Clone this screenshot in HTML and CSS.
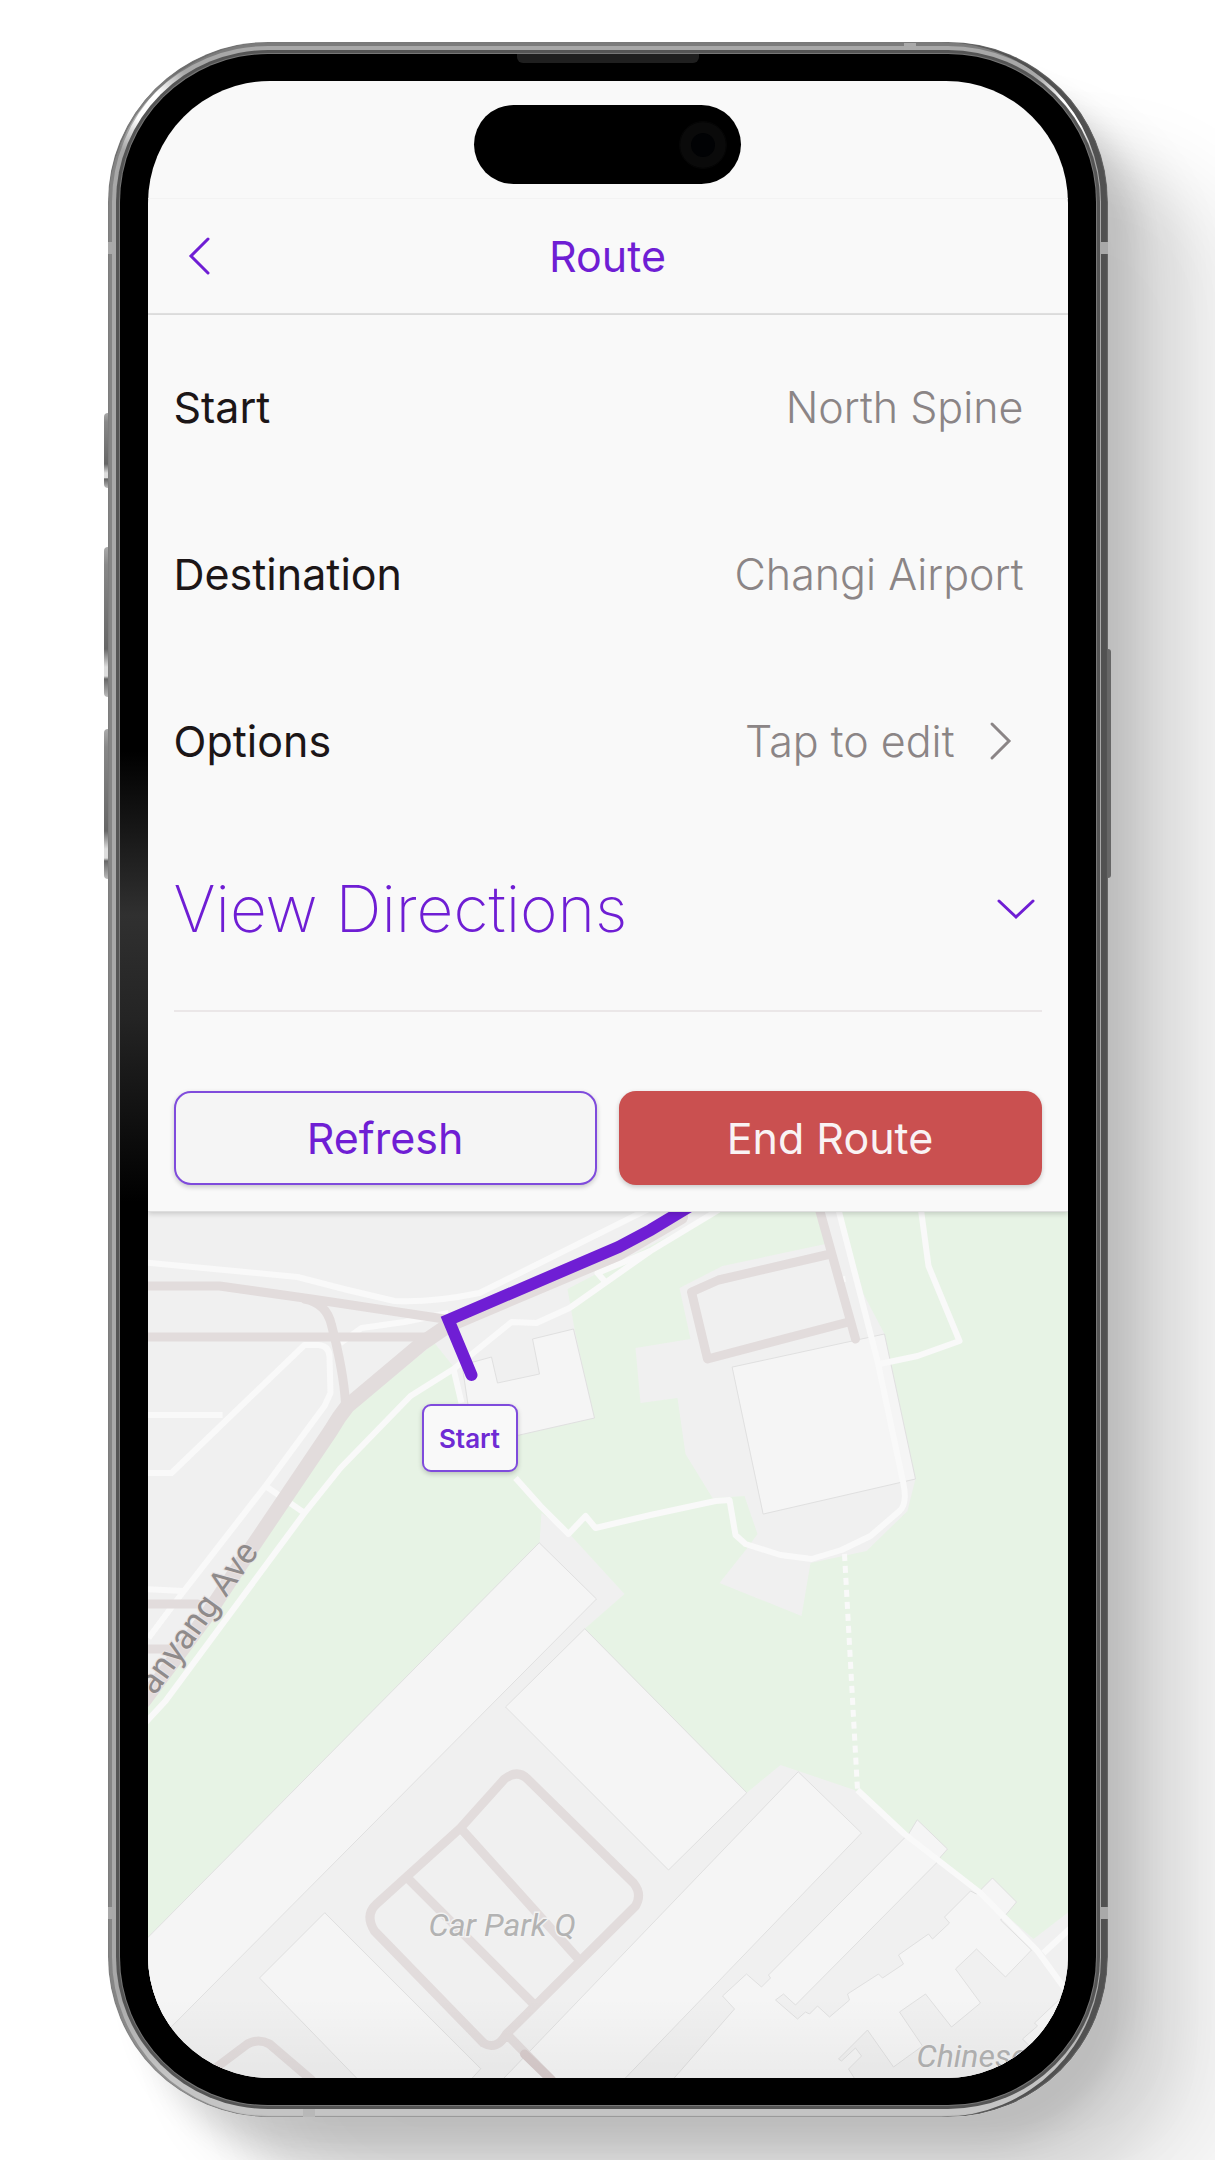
FILE: index.html
```html
<!DOCTYPE html>
<html lang="en">
<head>
<meta charset="utf-8">
<meta name="viewport" content="width=device-width, initial-scale=1">
<title>Route</title>
<link rel="stylesheet" href="styles.css">
</head>
<body>
<main class="stage">
  <div class="phone">
    <span class="side-key key-action"></span>
    <span class="side-key key-up"></span>
    <span class="side-key key-down"></span>
    <span class="side-key key-power"></span>
    <span class="band band-left band-high"></span>
    <span class="band band-right band-high"></span>
    <span class="band band-left band-low"></span>
    <span class="band band-right band-low"></span>
    <span class="band band-top"></span>
    <span class="band band-bottom"></span>
    <div class="bezel">
      <span class="speaker"></span>
      <div class="screen">
        <div class="status-bar">
          <div class="island"><span class="camera"></span></div>
        </div>
        <header class="nav-bar">
          <button class="back" type="button" aria-label="Back">
            <svg width="24" height="40" viewBox="0 0 24 40"><path d="M21 3 4 20 21 37"/></svg>
          </button>
          <h1 class="title">Route</h1>
        </header>
        <section class="panel">
          <div class="row">
            <span class="label">Start</span>
            <span class="value">North Spine</span>
          </div>
          <div class="row">
            <span class="label">Destination</span>
            <span class="value">Changi Airport</span>
          </div>
          <button class="row row-button" type="button">
            <span class="label">Options</span>
            <span class="value value-link">Tap to edit
              <svg width="24" height="40" viewBox="0 0 24 40"><path d="M3 3 20 20 3 37"/></svg>
            </span>
          </button>
          <button class="directions" type="button" aria-expanded="false">
            <span>View Directions</span>
            <svg width="40" height="24" viewBox="0 0 40 24"><path d="M3 4 20 20 37 4"/></svg>
          </button>
          <hr class="divider">
          <div class="actions">
            <button class="action action-refresh" type="button">Refresh</button>
            <button class="action action-end" type="button">End Route</button>
          </div>
        </section>
        <section class="map" aria-label="Map">
          <svg class="map-art" viewBox="147 1211 921 866" preserveAspectRatio="xMidYMid slice">
            <!-- parkland -->
            <path class="green" d="M715 1211 567 1288 574 1328 593 1417 519 1434 467 1440 454 1367 434 1342 350 1411 147 1700V1937L539 1542 541 1512 569 1533 624 1593 584 1628 746 1792 780 1764 854 1789 980 1892 1033 1938 1068 1911V1211Z"/>
            <path class="ground" d="M825 1243 722 1265 679 1287 690 1338 635 1347 640 1402 677 1397 685 1453 712 1497 744 1495 757 1533 746 1548 719 1582 801 1615 810 1562 866 1550 907 1510 915 1478 884 1333 863 1293 840 1211H816Z"/>
            <!-- buildings -->
            <g class="building">
              <path d="M732 1366 884 1333 915 1478 763 1513Z"/>
              <path d="M462 1364 491 1356 497 1382 539 1373 532 1338 573 1328 594 1417 519 1434 474 1445Z"/>
              <path d="M539 1542 596 1598 120 2077H60L147 1937Z"/>
              <path d="M584 1628 505 1706 668 1869 746 1792Z"/>
              <path d="M324 1912 259 1977 358 2079H470L480 2068Z"/>
              <path d="M798 1771 861 1832 623 2079H502Z"/>
              <path d="M917 1819 947 1848 940 1856 936 1862 795 2004 783 1993 775 1999 797 2018 805 2011 809 2013 817 2005 829 2016 849 1999 847 1993 878 1973 882 1977 903 1963 898 1954 928 1933 932 1938 949 1922 944 1916 970 1890 976 1893 992 1877 1016 1901 1006 1913 1000 1919 1031 1949 1005 1976 976 1948 955 1968 980 2002 951 2026 925 1993 899 2011 922 2045 893 2066 867 2029 838 2058 841 2060 855 2047 861 2055 848 2068 855 2079H672L734 2008 722 1995 746 1973 761 1986 770 1977 768 1974 908 1833Z"/>
              <path d="M1070 1988 1034 2022 1037 2025 1022 2038 1036 2052 1080 2052Z"/>
            </g>
            <!-- footpaths -->
            <g class="footpath">
              <path d="M140 1261 297 1276Q345 1289 394 1300 430 1302 479 1292L650 1207"/>
              <path d="M340 1342 361 1327 404 1321 448 1312"/>
              <path d="M140 1414H222"/>
              <path d="M140 1472H171L304 1344H318Q329 1345 329 1356L330 1392 324 1405 265 1485 178 1597 148 1637"/>
              <path d="M140 1588 183 1590"/>
              <path d="M265 1485 304 1512"/>
              <path d="M140 1727 165 1700 304 1512 340 1467 410 1395 453 1368 511 1321 536 1322 569 1307 650 1250 718 1209"/>
              <path d="M650 1250 597 1272 604 1280M453 1368 461 1402"/>
              <path d="M837 1205 877 1360 903 1483Q907 1503 899 1510L870 1535 841 1549 811 1558 780 1554 745 1543 735 1534 729 1499 715 1500 650 1514 595 1527 585 1515 568 1533 540 1505 515 1477"/>
              <path d="M845 1278 837 1279M920 1205 928 1265 959 1340 917 1355 879 1363"/>
              <path d="M857 1789 904 1833 980 1892 1037 1950 1066 1990M1043 1952 1070 1927"/>
              <path class="dotted" d="M844 1553 857 1789"/>
            </g>
            <!-- roads -->
            <g class="road">
              <path d="M140 1285H219L311 1298 444 1318M140 1336H425M304 1298Q326 1302 331 1324 343 1370 345 1402M140 1603H197M140 1648H172"/>
              <path d="M818 1205 855 1338M830 1253 718 1279 691 1291 707 1358 848 1321"/>
              <path d="M460 1827 504 1778Q517 1768 527 1778L633 1882Q642 1893 635 1905L506 2033Q496 2050 483 2042L374 1930Q364 1914 376 1903ZL577 1957M409 1879 533 2003M508 2035 551 2079M215 2067 247 2043Q258 2037 269 2043L311 2079"/>
              <path class="road-main" d="M680 1216 618 1252 450 1323 422 1342 347 1405Q338 1416 330 1430L251 1547 204 1618 143 1700"/>
              <path class="road-ramp" d="M524 2053 551 2079"/>
            </g>
            <text class="street" text-anchor="end" transform="translate(259 1551) rotate(-54)">anyang Ave</text>
            <text class="place" x="428" y="1935">Car Park Q</text>
            <text class="place" x="916" y="2066">Chinese</text>
            <path class="route" d="M698 1200 650 1229 618 1246 448 1319 471 1374"/>
          </svg>
          <span class="marker">Start</span>
        </section>
      </div>
    </div>
  </div>
</main>
</body>
</html>
```
FILE: styles.css
```css
* {
  box-sizing: border-box;
}

body {
  margin: 0;
  background: #fff;
  color: #1c1617;
  font-family: Inter, "Liberation Sans", sans-serif;
}

button {
  margin: 0;
  border: 0;
  padding: 0;
  background: none;
  color: inherit;
  font: inherit;
  text-align: left;
}

svg {
  flex: none;
  fill: none;
  stroke: currentColor;
  stroke-width: 3;
  stroke-linecap: round;
}

.stage {
  min-height: 100vh;
  padding: 42px 16px 44px;
  overflow: hidden;
}

/* Handset */

.phone {
  position: relative;
  max-width: 1000px;
  margin: 0 auto;
  padding: 12px;
  border-radius: 160px;
  background:
    radial-gradient(circle at 40px 64px, #fff 0, #fff 16px, transparent 50px),
    radial-gradient(circle at calc(100% - 36px) 70px, #fff 0, #fff 16px, transparent 50px),
    linear-gradient(to bottom, #a8a8a8 0, #a8a8a8 94%, #c4c4c4 98%);
  box-shadow:
    inset 0 0 1px 1px rgba(120, 120, 120, .6),
    inset 0 4px 0 rgba(80, 80, 80, .5),
    inset 4px 0 0 rgba(80, 80, 80, .4),
    inset -7px 0 0 #515151,
    28px 34px 30px -4px rgba(0, 0, 0, .11),
    70px 70px 50px rgba(0, 0, 0, .1),
    150px 110px 80px rgba(0, 0, 0, .07);
}

.bezel {
  position: relative;
  padding: 27px 28px;
  border-radius: 148px;
  background: linear-gradient(to bottom, #000 34%, #303030 42%, #242424 47%, #000 56%) left / 28px 100% no-repeat #000;
  box-shadow: 0 0 0 1px #777, 0 0 0 4px #555;
}

.screen {
  overflow: hidden;
  border-radius: 122px;
  background: #f9f9f9;
}

.speaker {
  position: absolute;
  top: 0;
  left: 50%;
  width: 182px;
  height: 9px;
  border-radius: 0 0 6px 6px;
  background: #1f1f1f;
  transform: translateX(-50%);
}

.side-key {
  position: absolute;
  left: -4px;
  width: 4px;
  border-radius: 4px 0 0 4px;
  background: linear-gradient(to bottom, #aaa, #888 12%, #666 68%, #ddd 80%, #ddd 86%, #666 88%, #bbb);
}

.key-action {
  top: 371px;
  height: 75px;
}

.key-up {
  top: 505px;
  height: 150px;
}

.key-down {
  top: 687px;
  height: 150px;
}

.key-power {
  top: 607px;
  right: -3px;
  left: auto;
  width: 3px;
  height: 229px;
  border-radius: 0 3px 3px 0;
  background: #666;
}

.band {
  position: absolute;
  width: 12px;
  height: 12px;
  background: #a9a9a9;
}

.band-left {
  left: 0;
}

.band-right {
  right: 0;
}

.band-high {
  top: 200px;
}

.band-low {
  bottom: 198px;
}

.band-top {
  top: 1px;
  right: 192px;
}

.band-bottom {
  bottom: 0;
  left: 195px;
  background: #b8b8b8;
}

/* Top of the screen */

.status-bar {
  display: flex;
  justify-content: center;
  height: 118px;
  padding-top: 24px;
  border-bottom: 1px solid #f4f4f4;
}

.island {
  display: flex;
  align-items: center;
  justify-content: flex-end;
  width: 267px;
  height: 79px;
  padding-right: 15px;
  border-radius: 40px;
  background: #000;
}

.camera {
  width: 46px;
  height: 46px;
  border: 11px solid #0a0a0a;
  border-radius: 50%;
  background: #010204;
  outline: 1px solid #060606;
}

.nav-bar {
  position: relative;
  display: grid;
  grid-template-columns: 70px 1fr 70px;
  align-items: center;
  height: 116px;
  padding: 0 16px;
  border-bottom: 2px solid #e2e2e2;
  box-shadow: 0 2px 4px rgba(0, 0, 0, .06);
  color: #6f1ed4;
}

.back {
  display: flex;
  justify-content: center;
}

.title {
  margin: 0;
  font-size: 43px;
  font-weight: 400;
  line-height: 52px;
  text-align: center;
}

/* Route details */

.panel {
  position: relative;
  z-index: 1;
  padding: 8px 26px 26px;
  border-bottom: 1px solid #dedede;
  background: #f9f9f9;
  box-shadow: 0 2px 5px rgba(0, 0, 0, .16);
}

.row {
  display: flex;
  align-items: center;
  justify-content: space-between;
  width: 100%;
  height: 167px;
  padding-right: 18px;
  font-size: 43px;
  font-weight: 400;
  line-height: 52px;
}

.value {
  color: #8b8586;
  font-weight: 300;
}

.value-link {
  display: flex;
  align-items: center;
  gap: 34px;
  padding-right: 11px;
}

.directions {
  display: flex;
  align-items: center;
  justify-content: space-between;
  width: 100%;
  height: 170px;
  padding-right: 6px;
  color: #6f1ed4;
  font-size: 64px;
  font-weight: 200;
  line-height: 80px;
}

.divider {
  margin: 16px 0 79px;
  border: 0;
  border-top: 2px solid #ebe7e8;
}

.actions {
  display: grid;
  grid-template-columns: 1fr 1fr;
  gap: 22px;
}

.action {
  height: 94px;
  border-radius: 17px;
  box-shadow: 0 2px 5px rgba(0, 0, 0, .2);
  font-size: 43px;
  font-weight: 400;
  text-align: center;
}

.action-refresh {
  border: 2px solid #7f4bdc;
  background: #f5f5f5;
  color: #6f1ed4;
}

.action-end {
  background: #ca5050;
  color: #f9f3f4;
}

/* Map */

.map {
  position: relative;
  background: #f0f0f0;
}

.map::after {
  content: "";
  position: absolute;
  inset: auto 0 0;
  height: 80px;
  background: linear-gradient(to bottom, transparent, rgba(0, 0, 0, .04));
}

.map-art {
  display: block;
  width: 100%;
  height: 866px;
  stroke: none;
}

.green {
  fill: #e7f3e5;
}

.ground {
  fill: #f0f0f0;
}

.building {
  fill: #f5f5f5;
  stroke: #e0e0e0;
  stroke-width: 1;
}

.footpath {
  stroke: #f9f9f9;
  stroke-width: 6;
  stroke-linecap: butt;
  stroke-linejoin: round;
}

.dotted {
  stroke-dasharray: 7 5;
  stroke-width: 5;
}

.road {
  stroke: #e2dcdc;
  stroke-width: 9;
  stroke-linejoin: round;
}

.road-main {
  stroke-width: 15;
}

.road-ramp {
  stroke: #d8cccc;
}

.street {
  fill: #8f8b8b;
  stroke: #e9e3e3;
  stroke-width: 2;
  paint-order: stroke;
  font: 400 35px Roboto, sans-serif;
}

.place {
  fill: #b3b3b3;
  stroke: #f2f2f2;
  stroke-width: 3;
  paint-order: stroke;
  font: italic 400 32px Roboto, sans-serif;
}

.route {
  stroke: #6f1ed4;
  stroke-width: 12;
  stroke-linejoin: miter;
}

.marker {
  position: absolute;
  top: 192px;
  left: calc(50% - 186px);
  display: flex;
  align-items: center;
  justify-content: center;
  width: 96px;
  height: 68px;
  border: 2px solid #7f4bdc;
  border-radius: 9px;
  background: #f9f9f9;
  box-shadow: 0 2px 5px rgba(0, 0, 0, .2);
  color: #6f2bd4;
  font-size: 26px;
  font-weight: 600;
}
```
